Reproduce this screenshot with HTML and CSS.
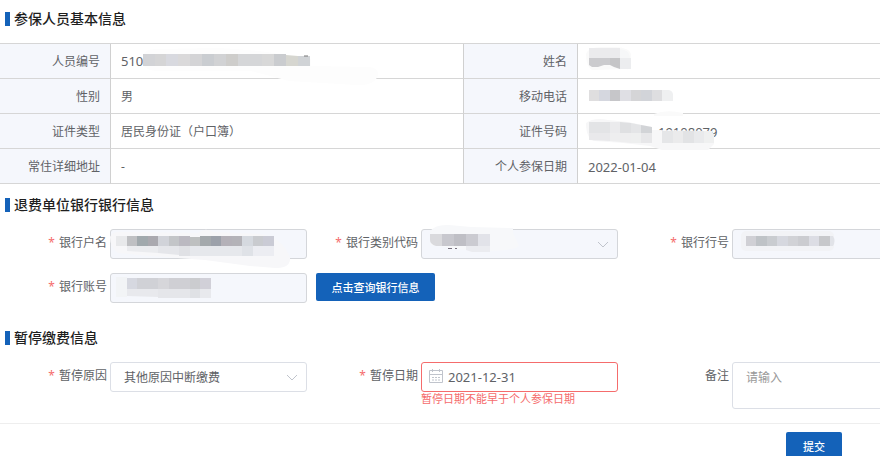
FILE: index.html
```html
<!DOCTYPE html>
<html lang="zh-CN">
<head>
    <meta charset="UTF-8">
    <meta name="viewport" content="width=device-width, initial-scale=1.0">
    <title>暂停缴费</title>
    <link rel="stylesheet" href="styles.css">
</head>
<body>
    <main class="page">
        <h2 class="section-title">参保人员基本信息</h2>
        <table class="info-table">
            <tr>
                <th>人员编号</th>
                <td class="value-wide"><span class="digits">510</span>
                    <svg class="mask" width="272" height="44" aria-hidden="true">
                        <path d="M32 12Q34 4 48 5L105 4Q150 6 172 11L200 15 200 22 258 23Q268 24 267 31Q264 42 245 41L178 37 140 27 45 27Q34 26 32 20Z" fill="#fdfdfd"/>
                        <path d="M32 10h12v12h-12z" fill="#d2d3d6"/><path d="M44 10h11v12h-11z" fill="#d5d5d6"/>
                        <path d="M55 10h12v12h-12z" fill="#d8d9df"/><path d="M67 10h12v12h-12z" fill="#dad9da"/>
                        <path d="M79 10h12v12h-12z" fill="#d4d4d6"/><path d="M91 10h12v12h-12z" fill="#cacdd1"/>
                        <path d="M103 10h12v12h-12z" fill="#d1d2d4"/><path d="M115 10h12v12h-12z" fill="#cecdcb"/>
                        <path d="M127 10h24v12h-24z" fill="#d5d6d8"/><path d="M151 10h12v12h-12z" fill="#d8d8d8"/>
                        <path d="M163 10h12v12h-12z" fill="#cacccf"/><path d="M175 11l12 1v10h-12z" fill="#d6d6d0"/>
                        <path d="M187 12h12v10h-12z" fill="#d0d3d6"/><path d="M193 12h4" stroke="#777"/>
                    </svg>
                </td>
                <th>姓名</th>
                <td>
                    <svg class="mask" width="70" height="34" aria-hidden="true">
                        <path d="M8 10Q10 3 24 3L38 3Q52 4 53 10V22Q53 26 48 25L14 26Q8 22 8 10Z" fill="#fafafa"/>
                        <path d="M11 4h31v10h-31z" fill="#ebebed"/><path d="M42 5Q52 6 52 14H42z" fill="#f6f7f8"/>
                        <path d="M11 14h21v7l-6 0-6 2h-6l-3-2z" fill="#cbcbce"/><path d="M32 14h10v11l-6-2-4-2z" fill="#c5c5c7"/>
                        <path d="M42 14h11v11h-11z" fill="#ecedef"/>
                    </svg>
                </td>
            </tr>
            <tr>
                <th>性别</th>
                <td class="value-wide">男</td>
                <th>移动电话</th>
                <td>
                    <svg class="mask" width="110" height="34" aria-hidden="true">
                        <path d="M11 11h10v11h-10z" fill="#dfdedf"/><path d="M21 11h11v11h-11z" fill="#d5d7df"/>
                        <path d="M32 11h10v11h-10z" fill="#c6c6c9"/><path d="M42 11h11v11h-11z" fill="#dfdfe4"/>
                        <path d="M53 11h10v11h-10z" fill="#d5d5d7"/><path d="M63 11h11v11h-11z" fill="#d2d4d9"/>
                        <path d="M74 11h10v11h-10z" fill="#dedee0"/><path d="M84 11h7q4 1 4 5v6h-11z" fill="#eff0f1"/>
                    </svg>
                </td>
            </tr>
            <tr>
                <th>证件类型</th>
                <td class="value-wide">居民身份证（户口簿）</td>
                <th>证件号码</th>
                <td>
                    <span class="id-tail">19108079</span>
                    <svg class="mask" width="160" height="46" aria-hidden="true">
                        <path d="M76 0Q88-5 105-1V2H76z" fill="#fafafa"/>
                        <path d="M8 9Q16 3 30 6L50 8 74 13V16L134 17 136 30 130 36H84L72 32 45 29 16 27Q8 24 8 9Z" fill="#f7f7f8"/>
                        <path d="M11 8h21v11h-21z" fill="#e3e4e6"/><path d="M32 8h10v11h-10z" fill="#ebebed"/>
                        <path d="M42 8l11 1v10h-11z" fill="#dfe0e2"/><path d="M53 9l10 2v8h-10z" fill="#e4e5e7"/>
                        <path d="M63 11l11 2v6h-11z" fill="#d2d4d7"/><path d="M11 19h21v8l-21-1z" fill="#e9e9eb"/>
                        <path d="M32 19h21v10l-21-2z" fill="#eeeeef"/><path d="M53 19h10v10h-10z" fill="#eeefef"/>
                        <path d="M63 19h11v10h-11z" fill="#e7e7e9"/><path d="M84 17h11v12h-11z" fill="#e5e6e8"/>
                        <path d="M95 17h10v12h-10z" fill="#ebebec"/><path d="M105 17h11v12h-11z" fill="#e2e3e5"/>
                        <path d="M116 17h10v12h-10z" fill="#e9eaec"/><path d="M126 17h7l3 3v9h-10z" fill="#eff0f0"/>
                    </svg>
                </td>
            </tr>
            <tr>
                <th>常住详细地址</th>
                <td class="value-wide">-</td>
                <th>个人参保日期</th>
                <td>2022-01-04</td>
            </tr>
        </table>

        <h2 class="section-title">退费单位银行银行信息</h2>
        <form class="form-grid">
            <div class="field">
                <label class="required" for="accountName">银行户名</label>
                <div class="control">
                    <input type="text" id="accountName" disabled>
                    <svg class="mask" width="190" height="44" aria-hidden="true">
                        <path d="M0 8Q2 2 14 3L88 4Q95-2 103 3L150 5Q172 8 180 28Q181 40 165 39L140 37 95 31 40 27 8 24Q0 18 0 8Z" fill="#f7f7f9"/>
                        <path d="M6 7h11v10h-11z" fill="#e8e9eb"/><path d="M17 7h10v10h-10z" fill="#bfc0c3"/>
                        <path d="M27 7h11v10h-11z" fill="#a1a9ad"/><path d="M38 7h10v10h-10z" fill="#aaa9af"/>
                        <path d="M48 7h11v10h-11z" fill="#d1d3d9"/><path d="M59 7h10v10h-10z" fill="#c3c5c8"/>
                        <path d="M69 7h11v10h-11z" fill="#bbb9c1"/><path d="M80 8h10v9h-10z" fill="#bec0c0"/>
                        <path d="M90 7h11v10h-11z" fill="#a4a9ac"/><path d="M101 7h10v10h-10z" fill="#9ca1aa"/>
                        <path d="M111 7h11v10h-11z" fill="#b4b1b8"/><path d="M122 7h10v10h-10z" fill="#b4b3b8"/>
                        <path d="M132 7h11v10h-11z" fill="#d5d9df"/><path d="M143 7h10v10h-10z" fill="#c9cbcf"/>
                        <path d="M153 7h11v10h-11z" fill="#cacbd5"/><path d="M17 17h31v7l-31-2z" fill="#ebecef"/>
                        <path d="M48 17h21v9l-21-2z" fill="#e5e6ea"/><path d="M69 17h11v10h-11z" fill="#e0e1e5"/>
                        <path d="M80 17h52v10h-52z" fill="#e6e8ec"/><path d="M132 17h11v10h-11z" fill="#dfe2e7"/>
                        <path d="M143 17h21v10h-21z" fill="#ecedf2"/>
                    </svg>
                </div>
            </div>
            <div class="field">
                <label class="required" for="bankType">银行类别代码</label>
                <div class="control">
                    <select id="bankType" disabled><option></option></select>
                    <svg class="chevron" width="12" height="8" viewBox="0 0 12 8" aria-hidden="true"><path d="M1 1l5 5 5-5"/></svg>
                    <svg class="mask" width="110" height="30" aria-hidden="true">
                        <path d="M9 2Q15-5 28-4L50-2 92-1V4L98 17Q88 24 45 21L10 16Z" fill="#f7f8fa"/>
                        <path d="M9 5h12v12h-6q-6-2-6-6z" fill="#dadadd"/><path d="M21 5h12v12h-12z" fill="#c8c8ce"/>
                        <path d="M33 5h12v12h-12z" fill="#bfbfc5"/><path d="M45 5h12v12h-12z" fill="#cbcbd1"/>
                        <path d="M57 5h12v12h-12z" fill="#e2e3e9"/><path d="M45 17h24v6h-18l-6-2z" fill="#ebecf0"/>
                        <path d="M27 19.500h4m3 0h2" stroke="#77717c"/>
                    </svg>
                </div>
            </div>
            <div class="field">
                <label class="required" for="bankNo">银行行号</label>
                <div class="control">
                    <input type="text" id="bankNo" disabled>
                    <svg class="mask" width="110" height="28" aria-hidden="true">
                        <rect x="9" y="2" width="93" height="20" rx="5" fill="#f2f3f6"/>
                        <path d="M14 7h10v10h-10z" fill="#d0d0d5"/><path d="M24 7h11v10h-11z" fill="#bfc3c7"/>
                        <path d="M35 7h10v10h-10z" fill="#c9ccd0"/><path d="M45 7h11v10h-11z" fill="#d6d8df"/>
                        <path d="M56 7h10v10h-10z" fill="#d1d2d6"/><path d="M66 7h11v10h-11z" fill="#cbccd0"/>
                        <path d="M77 7h10v10h-10z" fill="#dcdde4"/><path d="M87 7h11v10h-11z" fill="#c7c8cb"/>
                        <path d="M98 7h3q3 5 0 10h-3z" fill="#e1e3e8"/>
                    </svg>
                </div>
            </div>
            <div class="field">
                <label class="required" for="accountNo">银行账号</label>
                <div class="control">
                    <input type="text" id="accountNo" disabled>
                    <svg class="mask" width="110" height="28" aria-hidden="true">
                        <path d="M6 4h11v20h-11z" fill="#f2f4f6"/>
                        <path d="M17 5h10v11h-10z" fill="#d6d8e0"/><path d="M27 5h21v11h-21z" fill="#d0d1d6"/>
                        <path d="M48 5h11v11h-11z" fill="#d6d6da"/><path d="M59 5h21v11h-21z" fill="#cfcfd4"/>
                        <path d="M80 5h10v11h-10z" fill="#cbcccf"/><path d="M90 5h11v11h-11z" fill="#d1d0d8"/>
                        <path d="M17 16h31v8l-31-1z" fill="#e8e9ed"/><path d="M48 16h32v9h-32z" fill="#e5e6ea"/>
                        <path d="M80 16h10v9h-10z" fill="#dfe1e5"/><path d="M90 16h11v9h-11z" fill="#e8e9ed"/>
                    </svg>
                </div>
            </div>
            <div class="field">
                <button type="button" class="btn btn-query">点击查询银行信息</button>
            </div>
        </form>

        <h2 class="section-title">暂停缴费信息</h2>
        <form class="form-grid" id="pauseForm">
            <div class="field">
                <label class="required" for="reason">暂停原因</label>
                <div class="control">
                    <select id="reason"><option>其他原因中断缴费</option></select>
                    <svg class="chevron" width="12" height="8" viewBox="0 0 12 8" aria-hidden="true"><path d="M1 1l5 5 5-5"/></svg>
                </div>
            </div>
            <div class="field">
                <label class="required" for="pauseDate">暂停日期</label>
                <div class="control">
                    <input type="text" id="pauseDate" class="date-input is-error" value="2021-12-31" aria-describedby="dateError">
                    <svg class="calendar" width="14" height="14" viewBox="0 0 14 14" aria-hidden="true">
                        <path d="M.5 1.5h13v12H.5zM.5 5.5h13M3.5 0v3M10.5 0v3M3 8.5h2M6 8.5h2M9 8.5h2M3 11h2M6 11h2M9 11h2"/>
                    </svg>
                    <p class="error-text" id="dateError">暂停日期不能早于个人参保日期</p>
                </div>
            </div>
            <div class="field">
                <label for="remark">备注</label>
                <div class="control">
                    <textarea id="remark" placeholder="请输入"></textarea>
                </div>
            </div>
        </form>

        <footer class="footer">
            <button type="submit" form="pauseForm" class="btn btn-submit">提交</button>
        </footer>
    </main>
</body>
</html>
```
FILE: styles.css
```css
* {
    box-sizing: border-box;
}
html {
    overflow: hidden;
}
body {
    margin: 0;
    font-family: "Noto Sans", "Noto Sans CJK SC", sans-serif;
    font-size: 12px;
    line-height: 20px;
    color: #606266;
    background-color: #fff;
}
input, select, textarea, button {
    font-family: inherit;
    font-size: 12px;
}
.page {
    min-width: 933px;
    padding-top: 9px;
}

/* section headings */
.section-title {
    display: flex;
    align-items: center;
    gap: 4px;
    margin: 11px 0 14px;
    padding-left: 5px;
    font-size: 14px;
    font-weight: 500;
    line-height: 20px;
    color: #1f1f1f;
}
.section-title:first-child {
    margin-top: 0;
}
.section-title::before {
    content: "";
    width: 5px;
    height: 14px;
    background-color: #1462b9;
}

/* person info */
.info-table {
    width: 100%;
    table-layout: fixed;
    border-collapse: separate;
    border-spacing: 0;
    border-top: 1px solid #d6d6d6;
}
.info-table th,
.info-table td {
    position: relative;
    height: 35px;
    padding: 1px 10px 0;
    border-bottom: 1px solid #d6d6d6;
}
.info-table th {
    width: 111px;
    border-right: 1px solid #d0d0d0;
    background-color: #f5f7fc;
    font-weight: 400;
    text-align: right;
}
.info-table th:nth-child(3) {
    width: 114px;
}
.info-table td {
    font-size: 13px;
}
.info-table .value-wide {
    width: 353px;
    border-right: 1px solid #d0d0d0;
    font-size: 12px;
}
.info-table .digits {
    font-size: 13px;
}
.info-table .id-tail {
    padding-left: 70px;
}
.mask {
    position: absolute;
    top: 0;
    left: 0;
    z-index: 1;
    overflow: visible;
    pointer-events: none;
}

/* forms */
.form-grid {
    display: grid;
    grid-template-columns: repeat(3, 1fr);
    gap: 14px 0;
    padding-bottom: 14px;
}
.field {
    display: flex;
    align-items: flex-start;
}
.field label {
    width: 110px;
    padding-right: 3px;
    line-height: 28px;
    text-align: right;
}
.required::before {
    content: "*";
    margin-right: 4px;
    color: #f56c6c;
}
.control {
    position: relative;
    flex: 1;
    margin-right: 4px;
}
.control input,
.control select,
.control textarea {
    display: block;
    width: 100%;
    height: 30px;
    padding: 0 13px;
    border: 1px solid #dcdfe6;
    border-radius: 3px;
    outline: none;
    background-color: #fff;
    color: #606266;
    appearance: none;
}
.control input:disabled,
.control select:disabled {
    border-color: #d4d6da;
    background-color: #f5f7fc;
    opacity: 1;
}
.control textarea {
    height: 47px;
    padding: 5px 13px;
    line-height: 20px;
    resize: none;
}
.control textarea::placeholder {
    color: #999;
}
.control .date-input {
    padding-left: 26px;
    font-size: 13px;
}
.control .is-error {
    border-color: #f56c6c;
}
.chevron {
    position: absolute;
    top: 12px;
    right: 9px;
    fill: none;
    stroke: #c0c4cc;
}
.calendar {
    position: absolute;
    top: 7px;
    left: 8px;
    fill: none;
    stroke: #c0c4cc;
}
.error-text {
    position: absolute;
    top: 30px;
    left: 0;
    margin: 0;
    font-size: 11px;
    line-height: 14px;
    white-space: nowrap;
    color: #f56c6c;
}

/* buttons */
.btn {
    height: 28px;
    padding: 0;
    border: 0;
    border-radius: 2px;
    background-color: #1462b9;
    color: #fff;
    font-size: 11px;
    font-weight: 500;
    cursor: pointer;
}
.btn-query {
    width: 119px;
    margin-left: 5px;
}
.btn-submit {
    width: 56px;
}
.footer {
    display: flex;
    justify-content: flex-end;
    padding: 8px 91px;
    border-top: 1px solid #eee;
}
```
